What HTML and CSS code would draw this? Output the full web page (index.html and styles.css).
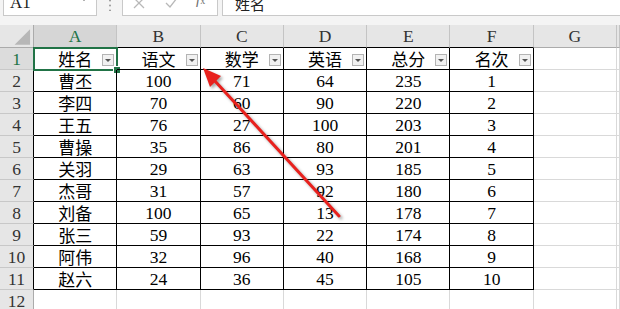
FILE: index.html
```html
<!DOCTYPE html>
<html lang="zh">
<head>
<meta charset="utf-8">
<title>Sheet</title>
<link rel="stylesheet" href="styles.css">
</head>
<body>
<div class="top">
  <div class="fbar">
    <div class="namebox"><span class="nb-text">A1</span><span class="nb-arrow"></span></div>
    <div class="fsep">
      <svg width="4" height="12" viewBox="0 0 4 12"><circle cx="2" cy="1.5" r="1" fill="#9a9a9a"/><circle cx="2" cy="6.5" r="1" fill="#9a9a9a"/><circle cx="2" cy="11.5" r="1" fill="#9a9a9a"/></svg>
    </div>
    <div class="fbtns">
      <svg class="ico" width="12" height="12" viewBox="0 0 12 12"><path d="M1 1 L11 11 M11 1 L1 11" stroke="#b8b8b8" stroke-width="1.3" fill="none"/></svg>
      <svg class="ico" width="13" height="12" viewBox="0 0 13 12"><path d="M1 6 L5 10 L12 1" stroke="#b8b8b8" stroke-width="1.3" fill="none"/></svg>
      <span class="fx"><i>f</i><sub>x</sub></span>
    </div>
    <div class="formula">姓名</div>
  </div>
</div>

<div class="sheet">
  <div class="corner"><svg width="34" height="22" viewBox="0 0 34 22"><polygon points="31,4 31,20 15,20" fill="#b7b7b7"/></svg></div>
  <div class="ch sel">A</div><div class="ch tb">B</div><div class="ch tb">C</div><div class="ch tb">D</div><div class="ch tb">E</div><div class="ch tb">F</div><div class="ch">G</div><div class="ch"></div>

  <div class="rh sel tl">1</div>
  <div class="c t zh a1">姓名<span class="flt"></span></div><div class="c t zh">语文<span class="flt"></span></div><div class="c t zh">数学<span class="flt"></span></div><div class="c t zh">英语<span class="flt"></span></div><div class="c t zh">总分<span class="flt"></span></div><div class="c t zh">名次<span class="flt"></span></div><div class="c"></div><div class="c"></div>

  <div class="rh tl">2</div>
  <div class="c t zh">曹丕</div><div class="c t">100</div><div class="c t">71</div><div class="c t">64</div><div class="c t">235</div><div class="c t">1</div><div class="c"></div><div class="c"></div>

  <div class="rh tl">3</div>
  <div class="c t zh">李四</div><div class="c t">70</div><div class="c t">60</div><div class="c t">90</div><div class="c t">220</div><div class="c t">2</div><div class="c"></div><div class="c"></div>

  <div class="rh tl">4</div>
  <div class="c t zh">王五</div><div class="c t">76</div><div class="c t">27</div><div class="c t">100</div><div class="c t">203</div><div class="c t">3</div><div class="c"></div><div class="c"></div>

  <div class="rh tl">5</div>
  <div class="c t zh">曹操</div><div class="c t">35</div><div class="c t">86</div><div class="c t">80</div><div class="c t">201</div><div class="c t">4</div><div class="c"></div><div class="c"></div>

  <div class="rh tl">6</div>
  <div class="c t zh">关羽</div><div class="c t">29</div><div class="c t">63</div><div class="c t">93</div><div class="c t">185</div><div class="c t">5</div><div class="c"></div><div class="c"></div>

  <div class="rh tl">7</div>
  <div class="c t zh">杰哥</div><div class="c t">31</div><div class="c t">57</div><div class="c t">92</div><div class="c t">180</div><div class="c t">6</div><div class="c"></div><div class="c"></div>

  <div class="rh tl">8</div>
  <div class="c t zh">刘备</div><div class="c t">100</div><div class="c t">65</div><div class="c t">13</div><div class="c t">178</div><div class="c t">7</div><div class="c"></div><div class="c"></div>

  <div class="rh tl">9</div>
  <div class="c t zh">张三</div><div class="c t">59</div><div class="c t">93</div><div class="c t">22</div><div class="c t">174</div><div class="c t">8</div><div class="c"></div><div class="c"></div>

  <div class="rh tl">10</div>
  <div class="c t zh">阿伟</div><div class="c t">32</div><div class="c t">96</div><div class="c t">40</div><div class="c t">168</div><div class="c t">9</div><div class="c"></div><div class="c"></div>

  <div class="rh tl">11</div>
  <div class="c t zh">赵六</div><div class="c t">24</div><div class="c t">36</div><div class="c t">45</div><div class="c t">105</div><div class="c t">10</div><div class="c"></div><div class="c"></div>

  <div class="rh">12</div>
  <div class="c"></div><div class="c"></div><div class="c"></div><div class="c"></div><div class="c"></div><div class="c"></div><div class="c"></div><div class="c"></div>
</div>

<svg class="arrow" width="620" height="309" viewBox="0 0 620 309">
  <g class="arrow-g">
    <line x1="339" y1="216" x2="214" y2="80" stroke="#e8211d" stroke-width="3" stroke-linecap="round"/>
    <polygon points="203,68 221,76 210,87" fill="#e8211d"/>
  </g>
</svg>
</body>
</html>
```

FILE: styles.css
```css
* {
  box-sizing: border-box;
  margin: 0;
  padding: 0;
}

html, body {
  width: 620px;
  height: 309px;
  overflow: hidden;
  background: #fff;
}

body {
  position: relative;
  font-family: "Liberation Serif", "Noto Sans CJK SC", serif;
  color: #000;
}

/* ---------- formula bar ---------- */
.top {
  height: 25px;
  background: #f4f4f4;
}

.fbar {
  height: 16px;
  display: flex;
  align-items: flex-end;
}

.namebox {
  flex-shrink: 0;
  width: 94px;
  height: 30px;
  margin-left: 3px;
  background: #fff;
  border: 1px solid #c9c9c9;
  display: flex;
  align-items: flex-end;
  justify-content: space-between;
  padding: 0 8px 4px 6px;
  font-size: 17px;
  line-height: 1;
  color: #222;
}

.nb-arrow {
  width: 0;
  height: 0;
  border-left: 4px solid transparent;
  border-right: 4px solid transparent;
  border-top: 4px solid #666;
  margin-bottom: 10px;
}

.fsep {
  flex-shrink: 0;
  width: 25px;
  height: 16px;
  display: flex;
  justify-content: center;
  align-items: flex-end;
  padding-bottom: 5px;
  overflow: hidden;
}

.fbtns {
  flex-shrink: 0;
  width: 96px;
  height: 30px;
  background: #fff;
  border: 1px solid #c9c9c9;
  display: flex;
  align-items: flex-end;
  padding: 0 0 6px 10px;
  gap: 20px;
}

.fx {
  font-family: "Liberation Serif", serif;
  font-size: 15px;
  line-height: 1;
  color: #6e6e6e;
  margin-bottom: 2px;
  margin-left: -2px;
}

.fx sub {
  font-size: 10px;
  vertical-align: 0;
}

.formula {
  flex: 1;
  height: 30px;
  margin-left: 4px;
  background: #fff;
  border: 1px solid #c9c9c9;
  border-right: none;
  display: flex;
  align-items: flex-end;
  padding: 0 0 4px 12px;
  font-family: "Noto Sans CJK SC", sans-serif;
  font-size: 15px;
  line-height: 1;
  color: #222;
}

/* ---------- sheet grid ---------- */
.sheet {
  display: grid;
  grid-template-columns: 34px repeat(7, 83.3px) 1fr;
  grid-template-rows: 23px repeat(12, 22px);
  font-size: 17.5px;
  line-height: 1;
}

.corner {
  background: #e6e6e6;
  border-right: 1px solid #ababab;
  border-bottom: 1px solid #ababab;
  display: flex;
  align-items: flex-end;
}

.ch {
  background: #e6e6e6;
  border-right: 1px solid #c4c4c4;
  border-bottom: 1px solid #ababab;
  display: flex;
  align-items: flex-end;
  justify-content: center;
  padding-bottom: 2px;
  color: #333;
}

.ch.tb {
  border-bottom-color: #000;
}

.ch.sel {
  background: #d6d6d6;
  color: #217346;
  border-bottom: 1px solid #000;
}

.rh {
  background: #e6e6e6;
  border-right: 1px solid #ababab;
  border-bottom: 1px solid #c8c8c8;
  display: flex;
  align-items: flex-end;
  justify-content: center;
  padding-bottom: 1px;
  color: #333;
}

.rh.tl {
  border-right-color: #000;
}

.rh.sel {
  background: #dcdcdc;
  color: #217346;
}

.c {
  position: relative;
  border-right: 1px solid #d9d9d9;
  border-bottom: 1px solid #d9d9d9;
  display: flex;
  align-items: flex-end;
  justify-content: center;
  padding-bottom: 1px;
}

.c.t {
  border-right-color: #000;
  border-bottom-color: #000;
}

.c.zh {
  font-family: "Noto Sans CJK SC", sans-serif;
  font-size: 17px;
  padding-bottom: 2px;
}

/* filter dropdown button */
.flt {
  position: absolute;
  right: 2px;
  bottom: 3px;
  width: 12px;
  height: 12px;
  background: #f1f1f1;
  border: 1px solid #b4b4b4;
}

.flt::after {
  content: "";
  position: absolute;
  left: 2px;
  top: 4px;
  border-left: 3px solid transparent;
  border-right: 3px solid transparent;
  border-top: 3px solid #555;
}

/* active cell A1 */
.a1::before {
  content: "";
  position: absolute;
  left: -1px;
  top: -1px;
  right: -2px;
  bottom: -2px;
  border: 2px solid #217346;
  pointer-events: none;
}

.a1::after {
  content: "";
  position: absolute;
  right: -5px;
  bottom: -5px;
  width: 6px;
  height: 6px;
  background: #217346;
  border: 1px solid #fff;
}

/* annotation arrow */
.arrow {
  position: absolute;
  left: 0;
  top: 0;
  pointer-events: none;
}

.arrow-g {
  filter: drop-shadow(2px 2px 1.5px rgba(0, 0, 0, 0.35));
}
```
